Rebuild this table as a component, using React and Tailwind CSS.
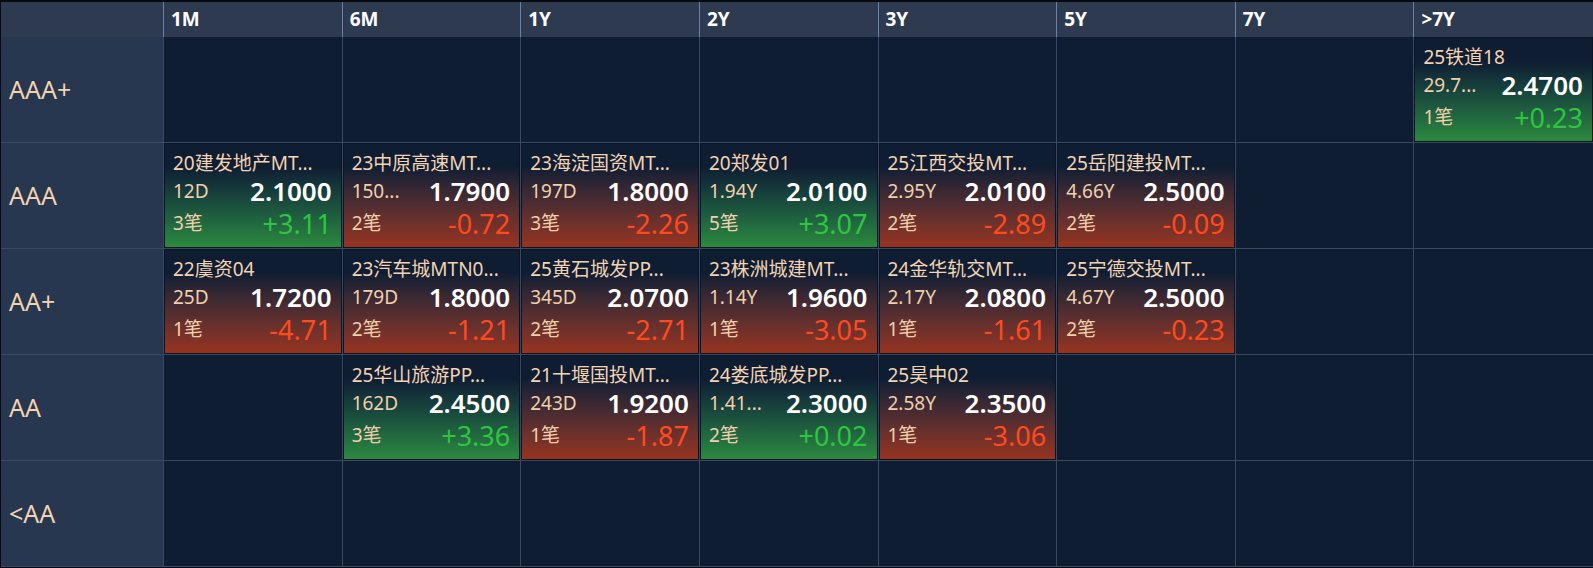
import React from "react";

const COLS = ["1M", "6M", "1Y", "2Y", "3Y", "5Y", "7Y", ">7Y"];

const ROWS = [
  {
    label: "AAA+",
    cells: {
      ">7Y": { name: "25铁道18", term: "29.7...", yld: "2.4700", cnt: "1笔", chg: "+0.23" },
    },
  },
  {
    label: "AAA",
    cells: {
      "1M": { name: "20建发地产MT...", term: "12D", yld: "2.1000", cnt: "3笔", chg: "+3.11" },
      "6M": { name: "23中原高速MT...", term: "150...", yld: "1.7900", cnt: "2笔", chg: "-0.72" },
      "1Y": { name: "23海淀国资MT...", term: "197D", yld: "1.8000", cnt: "3笔", chg: "-2.26" },
      "2Y": { name: "20郑发01", term: "1.94Y", yld: "2.0100", cnt: "5笔", chg: "+3.07" },
      "3Y": { name: "25江西交投MT...", term: "2.95Y", yld: "2.0100", cnt: "2笔", chg: "-2.89" },
      "5Y": { name: "25岳阳建投MT...", term: "4.66Y", yld: "2.5000", cnt: "2笔", chg: "-0.09" },
    },
  },
  {
    label: "AA+",
    cells: {
      "1M": { name: "22虞资04", term: "25D", yld: "1.7200", cnt: "1笔", chg: "-4.71" },
      "6M": { name: "23汽车城MTN0...", term: "179D", yld: "1.8000", cnt: "2笔", chg: "-1.21" },
      "1Y": { name: "25黄石城发PP...", term: "345D", yld: "2.0700", cnt: "2笔", chg: "-2.71" },
      "2Y": { name: "23株洲城建MT...", term: "1.14Y", yld: "1.9600", cnt: "1笔", chg: "-3.05" },
      "3Y": { name: "24金华轨交MT...", term: "2.17Y", yld: "2.0800", cnt: "1笔", chg: "-1.61" },
      "5Y": { name: "25宁德交投MT...", term: "4.67Y", yld: "2.5000", cnt: "2笔", chg: "-0.23" },
    },
  },
  {
    label: "AA",
    cells: {
      "6M": { name: "25华山旅游PP...", term: "162D", yld: "2.4500", cnt: "3笔", chg: "+3.36" },
      "1Y": { name: "21十堰国投MT...", term: "243D", yld: "1.9200", cnt: "1笔", chg: "-1.87" },
      "2Y": { name: "24娄底城发PP...", term: "1.41...", yld: "2.3000", cnt: "2笔", chg: "+0.02" },
      "3Y": { name: "25昊中02", term: "2.58Y", yld: "2.3500", cnt: "1笔", chg: "-3.06" },
    },
  },
  { label: "<AA", cells: {} },
];

function BondCard({ d }) {
  const up = d.chg.startsWith("+");
  return (
    <div
      className={`h-full flex flex-col pl-[8px] pr-[9px] pt-[8px] border border-[#0b1424] bg-gradient-to-b from-[#0f1d33] from-[22%] ${
        up ? "to-[#2b8a3d]" : "to-[#97331e]"
      }`}
    >
      <div className="leading-[22px] text-[19px] text-[#f3d3b1] whitespace-nowrap">{d.name}</div>
      <div className="h-[34px] flex items-center justify-between">
        <span className="leading-none text-[19px] text-[#f0cfab]">{d.term}</span>
        <span className="leading-none text-[26px] font-semibold text-white">{d.yld}</span>
      </div>
      <div className="h-[30px] flex items-center justify-between">
        <span className="leading-none text-[19px] text-[#f0cfab]">{d.cnt}</span>
        <span className={`leading-none text-[27px] ${up ? "text-[#2fc541]" : "text-[#ff4a1e]"}`}>{d.chg}</span>
      </div>
    </div>
  );
}

export default function App() {
  return (
    <div
      className="w-[1593px] h-[568px] bg-[#0a0f18] border-t-2 border-l border-b border-[#06090f] overflow-hidden"
      style={{ fontFamily: '"Noto Sans", "Noto Sans CJK SC", sans-serif' }}
    >
      <div className="grid grid-cols-[163px_repeat(8,minmax(0,1fr))]">
        {/* header */}
        <div className="h-[35px] bg-[#2e3a4f] border-r border-[#6a80aa]" />
        {COLS.map((c, i) => (
          <div
            key={c}
            className={`h-[35px] bg-[#2e3a4f] flex items-center pl-[7px] text-[19px] font-bold text-white ${
              i < COLS.length - 1 ? "border-r border-[#6a80aa]" : ""
            }`}
          >
            {c}
          </div>
        ))}

        {/* body */}
        {ROWS.map((row) => (
          <React.Fragment key={row.label}>
            <div className="h-[106px] bg-[#283750] border-r border-b border-[#3a4962] flex items-center pl-2 text-[25px] text-[#f3d3b1]">
              {row.label}
            </div>
            {COLS.map((c, i) => (
              <div
                key={c}
                className={`h-[106px] bg-[#0f1d33] border-b border-[#3a4962] ${
                  i < COLS.length - 1 ? "border-r" : ""
                }`}
              >
                {row.cells[c] && <BondCard d={row.cells[c]} />}
              </div>
            ))}
          </React.Fragment>
        ))}
      </div>
    </div>
  );
}
